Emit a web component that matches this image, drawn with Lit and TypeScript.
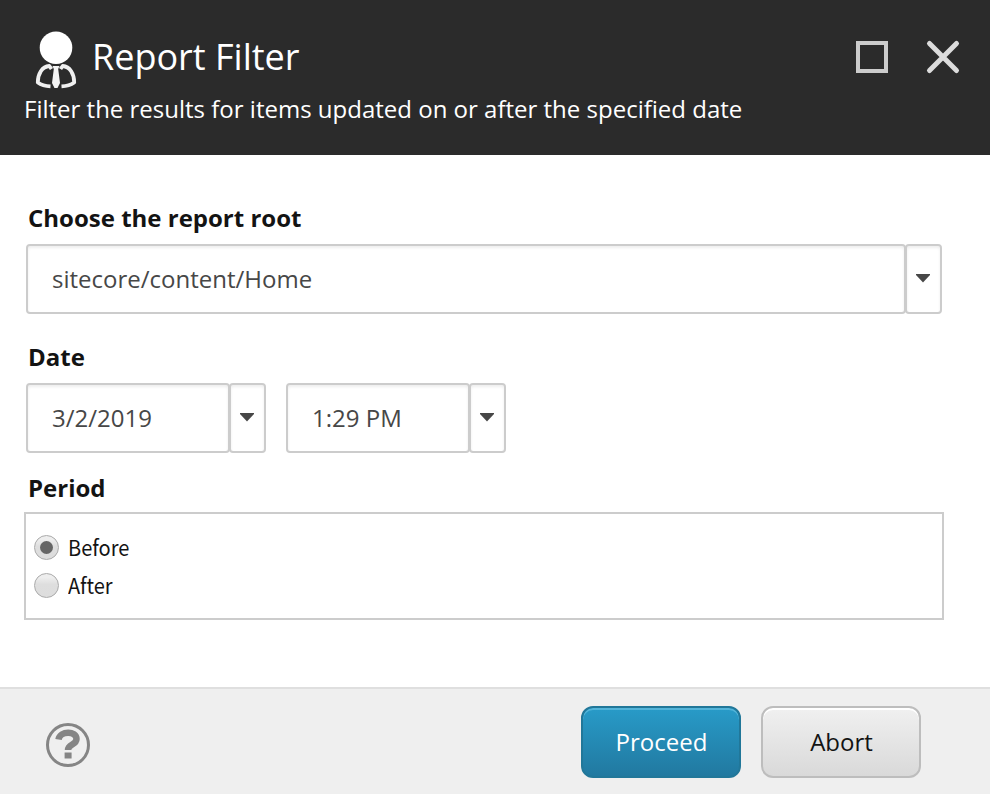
import { LitElement, html, css, svg } from "lit";
import { customElement, property, state } from "lit/decorators.js";

@customElement("combo-field")
class ComboField extends LitElement {
  @property() value = "";

  static styles = css`
    :host { display: flex; height: 70px; }
    .value, .toggle {
      box-sizing: border-box;
      height: 70px;
      border: 2px solid #ccc;
      border-radius: 4px;
      background: #fff;
      box-shadow: inset 0 2px 3px rgba(0, 0, 0, 0.07);
    }
    .value { flex: 1; padding: 0 24px; line-height: 66px; font-size: 24px; color: #474747; white-space: nowrap; }
    .toggle { flex: none; width: 37px; margin-left: -1px; padding-right: 2px; display: flex; align-items: center; justify-content: center; }
    .toggle svg { display: block; margin-bottom: 1px; }
  `;

  render() {
    return html`
      <div class="value">${this.value}</div>
      <div class="toggle">
        <svg width="14" height="9" viewBox="0 0 14 9"><path d="M0 0h14v1L7 8.5 0 1z" fill="#474747" /></svg>
      </div>
    `;
  }
}

@customElement("app-root")
class AppRoot extends LitElement {
  @state() period = "Before";

  static styles = css`
    :host {
      display: flex;
      flex-direction: column;
      height: 794px;
      overflow: hidden;
      background: #fff;
      color: #131313;
      font-family: "Open Sans", "Noto Sans", sans-serif;
      font-size: 24px;
    }
    svg { display: block; }
    header { box-sizing: border-box; flex: none; height: 155px; background: #2b2b2b; color: #fff; padding: 28px 29px 0 24px; }
    .top { display: flex; align-items: flex-start; height: 64px; }
    .person { flex: none; margin: 0 4px 0 0; }
    h1 { flex: 1; margin: 0; font-size: 36px; font-weight: 400; line-height: 58px; white-space: nowrap; }
    .max { box-sizing: border-box; width: 32px; height: 32px; margin: 13px 37px 0 0; border: 4px solid #ccc; }
    .close { margin-top: 11px; }
    .subtitle { margin: 0; line-height: 34px; white-space: nowrap; }
    main { box-sizing: border-box; flex: none; height: 532px; padding: 46px 46px 0 24px; }
    .label { height: 34px; margin-left: 4px; line-height: 34px; font-weight: 700; }
    .root { margin: 9px 2px 0; }
    .date { margin-top: 26px; }
    .pair { display: flex; gap: 20px; margin: 9px 2px 0; }
    .day { width: 240px; }
    .time { width: 220px; }
    .period { margin-top: 18px; }
    .group { box-sizing: border-box; height: 108px; margin-top: 7px; border: 2px solid #ccc; padding: 14px 8px; }
    .option { display: flex; align-items: center; height: 38px; }
    .radio { box-sizing: border-box; width: 25px; height: 25px; margin-right: 9px; border: 1px solid #aaa; border-radius: 50%; background: linear-gradient(#eee 15%, #dedede 45%, #ddd); display: flex; align-items: center; justify-content: center; }
    .dot { width: 13px; height: 13px; border-radius: 50%; background: #666; }
    .text { font-family: "Noto Sans CJK SC", sans-serif; font-size: 22px; line-height: 38px; margin-bottom: 2px; transform: scaleX(0.91); transform-origin: 0 50%; }
    footer { box-sizing: border-box; flex: 1; display: flex; align-items: flex-start; border-top: 2px solid #dfdfdf; background: #efefef; padding: 17px 69px 0 45px; }
    .help { margin: 16px auto 0 0; }
    .button { box-sizing: border-box; width: 160px; height: 72px; margin-left: 20px; border: 2px solid #bdbdbd; border-radius: 12px; font: inherit; color: #131313; text-align: center; padding: 0 0 2px 1px; background: linear-gradient(#f0f0f0, #d9d9d9); box-shadow: inset 0 2px 0 #fff; }
    .primary { border-color: #217799; color: #fff; background: linear-gradient(#289bc8, #2179a0); box-shadow: inset 0 2px 0 #53b4d9; }
  `;

  person() {
    return svg`<svg class="person" width="64" height="64" viewBox="24 28 64 64" fill="none" stroke="#f0f0f0">
      <circle cx="56" cy="47.800" r="16.300" fill="#fff" stroke="none" />
      <path d="M51.500 69L49.300 66C42 66.500 37.800 74 37.800 82.500c3.500 2.500 7.500 3.600 12.700 3.900" stroke-width="3.800" stroke-linejoin="round" />
      <path d="M60.500 69L62.700 66C70 66.500 74.200 74 74.200 82.500c-3.500 2.500-7.500 3.600-12.700 3.900" stroke-width="3.800" stroke-linejoin="round" />
      <path d="M52.500 66h7l-1.300 3 1.800 14-2.500 5h-3l-2.500-5 1.800-14z" fill="#f4f4f4" stroke="none" />
    </svg>`;
  }

  render() {
    return html`
      <header>
        <div class="top">
          ${this.person()}
          <h1>Report Filter</h1>
          <div class="max"></div>
          <svg class="close" width="36" height="36" viewBox="0 0 36 36"><path d="M4.500 4.500l27 27M31.500 4.500l-27 27" stroke="#dcdcdc" stroke-width="5" stroke-linecap="round" /></svg>
        </div>
        <p class="subtitle">Filter the results for items updated on or after the specified date</p>
      </header>
      <main>
        <div class="label">Choose the report root</div>
        <combo-field class="root" value="sitecore/content/Home"></combo-field>
        <div class="label date">Date</div>
        <div class="pair">
          <combo-field class="day" value="3/2/2019"></combo-field>
          <combo-field class="time" value="1:29 PM"></combo-field>
        </div>
        <div class="label period">Period</div>
        <div class="group">
          ${["Before", "After"].map(
            (name) => html`<div class="option" @click=${() => (this.period = name)}>
              <span class="radio">${this.period === name ? html`<span class="dot"></span>` : ""}</span>
              <span class="text">${name}</span>
            </div>`
          )}
        </div>
      </main>
      <footer>
        <svg class="help" width="46" height="46" viewBox="0 0 46 46" fill="none" stroke="#858585">
          <circle cx="23" cy="23" r="20.500" stroke-width="3" />
          <path d="M13.500 17.500C15 8.500 31.500 8.500 31.500 17c0 6-8.500 5-8.500 11" stroke-width="6.500" />
          <path d="M19.600 30.500h7v6h-7z" fill="#858585" stroke="none" />
        </svg>
        <button class="button primary">Proceed</button>
        <button class="button">Abort</button>
      </footer>
    `;
  }
}
